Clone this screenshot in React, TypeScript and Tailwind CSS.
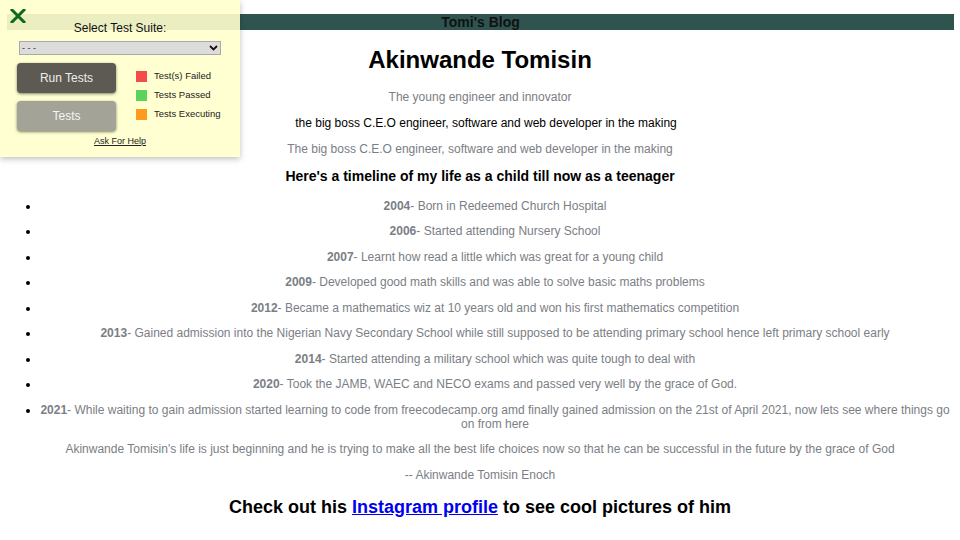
import React from "react";

const gray = "text-[#7a7e85]";

const items: [string, string][] = [
  ["2004", "Born in Redeemed Church Hospital"],
  ["2006", "Started attending Nursery School"],
  ["2007", "Learnt how read a little which was great for a young child"],
  ["2009", "Developed good math skills and was able to solve basic maths problems"],
  ["2012", "Became a mathematics wiz at 10 years old and won his first mathematics competition"],
  ["2013", "Gained admission into the Nigerian Navy Secondary School while still supposed to be attending primary school hence left primary school early"],
  ["2014", "Started attending a military school which was quite tough to deal with"],
  ["2020", "Took the JAMB, WAEC and NECO exams and passed very well by the grace of God."],
  ["2021", "While waiting to gain admission started learning to code from freecodecamp.org amd finally gained admission on the 21st of April 2021, now lets see where things go on from here"],
];

function TestPanel() {
  return (
    <div className="absolute left-0 top-0 w-[240px] h-[157px] bg-[rgba(255,255,204,0.9)] shadow-[0_2px_6px_rgba(0,0,0,0.25)] font-['Liberation_Sans',Arial,sans-serif]">
      <svg className="absolute left-[10px] top-[9px]" width="16" height="14" viewBox="0 0 16 14">
        <path d="M2 1 L14 13 M14 1 L2 13" stroke="#0b6b16" strokeWidth="3" strokeLinecap="square" />
      </svg>
      <div className="flex flex-col items-center">
        <div className="mt-[20px] h-[16px] leading-[16px] text-[12px] text-[#111]">Select Test Suite:</div>
        <div className="mt-[5px] w-[202px] h-[14px] bg-[#dcdcdc] border border-[#aaa] flex items-center justify-between px-[2px] text-[9px] text-[#333]">
          <span className="leading-none">- - -</span>
          <svg width="9" height="6" viewBox="0 0 9 6">
            <path d="M1 1 L4.5 4.5 L8 1" stroke="#111" strokeWidth="1.8" fill="none" />
          </svg>
        </div>
        <div className="mt-[8px] w-[202px] flex">
          <div className="flex flex-col gap-[8px] w-[99px] ml-[-2px]">
            <div className="h-[30px] rounded-[4px] bg-[#5c5a52] text-[#eeeeee] text-[12px] flex items-center justify-center shadow-[0_1px_3px_rgba(0,0,0,0.5)]">Run Tests</div>
            <div className="h-[30px] rounded-[4px] bg-[#a4a397] text-[#f4f4f4] text-[12px] flex items-center justify-center shadow-[0_1px_3px_rgba(0,0,0,0.5)]">Tests</div>
          </div>
          <div className="ml-[20px] mt-[8px] flex flex-col gap-[8px]">
            <div className="flex items-center gap-[7px] h-[11px]">
              <span className="w-[11px] h-[11px] bg-[#f44b4b]" />
              <span className="text-[9.5px] text-[#222]">Test(s) Failed</span>
            </div>
            <div className="flex items-center gap-[7px] h-[11px]">
              <span className="w-[11px] h-[11px] bg-[#5ad35a]" />
              <span className="text-[9.5px] text-[#222]">Tests Passed</span>
            </div>
            <div className="flex items-center gap-[7px] h-[11px]">
              <span className="w-[11px] h-[11px] bg-[#ff9a1c]" />
              <span className="text-[9.5px] text-[#222]">Tests Executing</span>
            </div>
          </div>
        </div>
        <a className="mt-[4px] text-[9px] text-[#222] underline leading-[12px]">Ask For Help</a>
      </div>
    </div>
  );
}

export default function App() {
  return (
    <div className="relative w-[960px] h-[540px] overflow-hidden bg-white font-['Liberation_Sans',Arial,sans-serif]">
      <div className="pt-[14px]">
        <header className="ml-[7px] w-[947px] h-[16px] bg-[#2f5450] flex items-center justify-center">
          <span className="text-[14px] font-bold text-[#111] leading-none">Tomi's Blog</span>
        </header>
        <div className="text-center">
          <h1 className="mt-[12px] h-[36px] leading-[36px] text-[24px] font-bold text-black">Akinwande Tomisin</h1>
          <p className={`mt-[12px] leading-[14px] text-[12px] ${gray}`}>The young engineer and innovator</p>
          <p className="mt-[12px] pl-[12px] leading-[14px] text-[12px] text-black">the big boss C.E.O engineer, software and web developer in the making</p>
          <p className={`mt-[12px] leading-[14px] text-[12px] ${gray}`}>The big boss C.E.O engineer, software and web developer in the making</p>
          <h2 className="mt-[12px] leading-[17px] text-[14px] font-bold text-black">Here's a timeline of my life as a child till now as a teenager</h2>
        </div>
        <ul className="list-disc marker:text-black pl-[40px] pr-[10px] mt-[14px] flex flex-col gap-[11.45px] text-center">
          {items.map(([y, t]) => (
            <li key={y} className={`leading-[14px] text-[12px] ${gray}`}>
              <b>{y}</b>- {t}
            </li>
          ))}
        </ul>
        <div className="text-center">
          <p className={`mt-[11px] leading-[14px] text-[12px] ${gray}`}>Akinwande Tomisin's life is just beginning and he is trying to make all the best life choices now so that he can be successful in the future by the grace of God</p>
          <p className={`mt-[12px] leading-[14px] text-[12px] ${gray}`}>-- Akinwande Tomisin Enoch</p>
          <h2 className="mt-[14px] leading-[22px] text-[18px] font-bold text-black">
            Check out his <a className="text-[#0000ee] underline">Instagram profile</a> to see cool pictures of him
          </h2>
        </div>
      </div>
      <TestPanel />
    </div>
  );
}
